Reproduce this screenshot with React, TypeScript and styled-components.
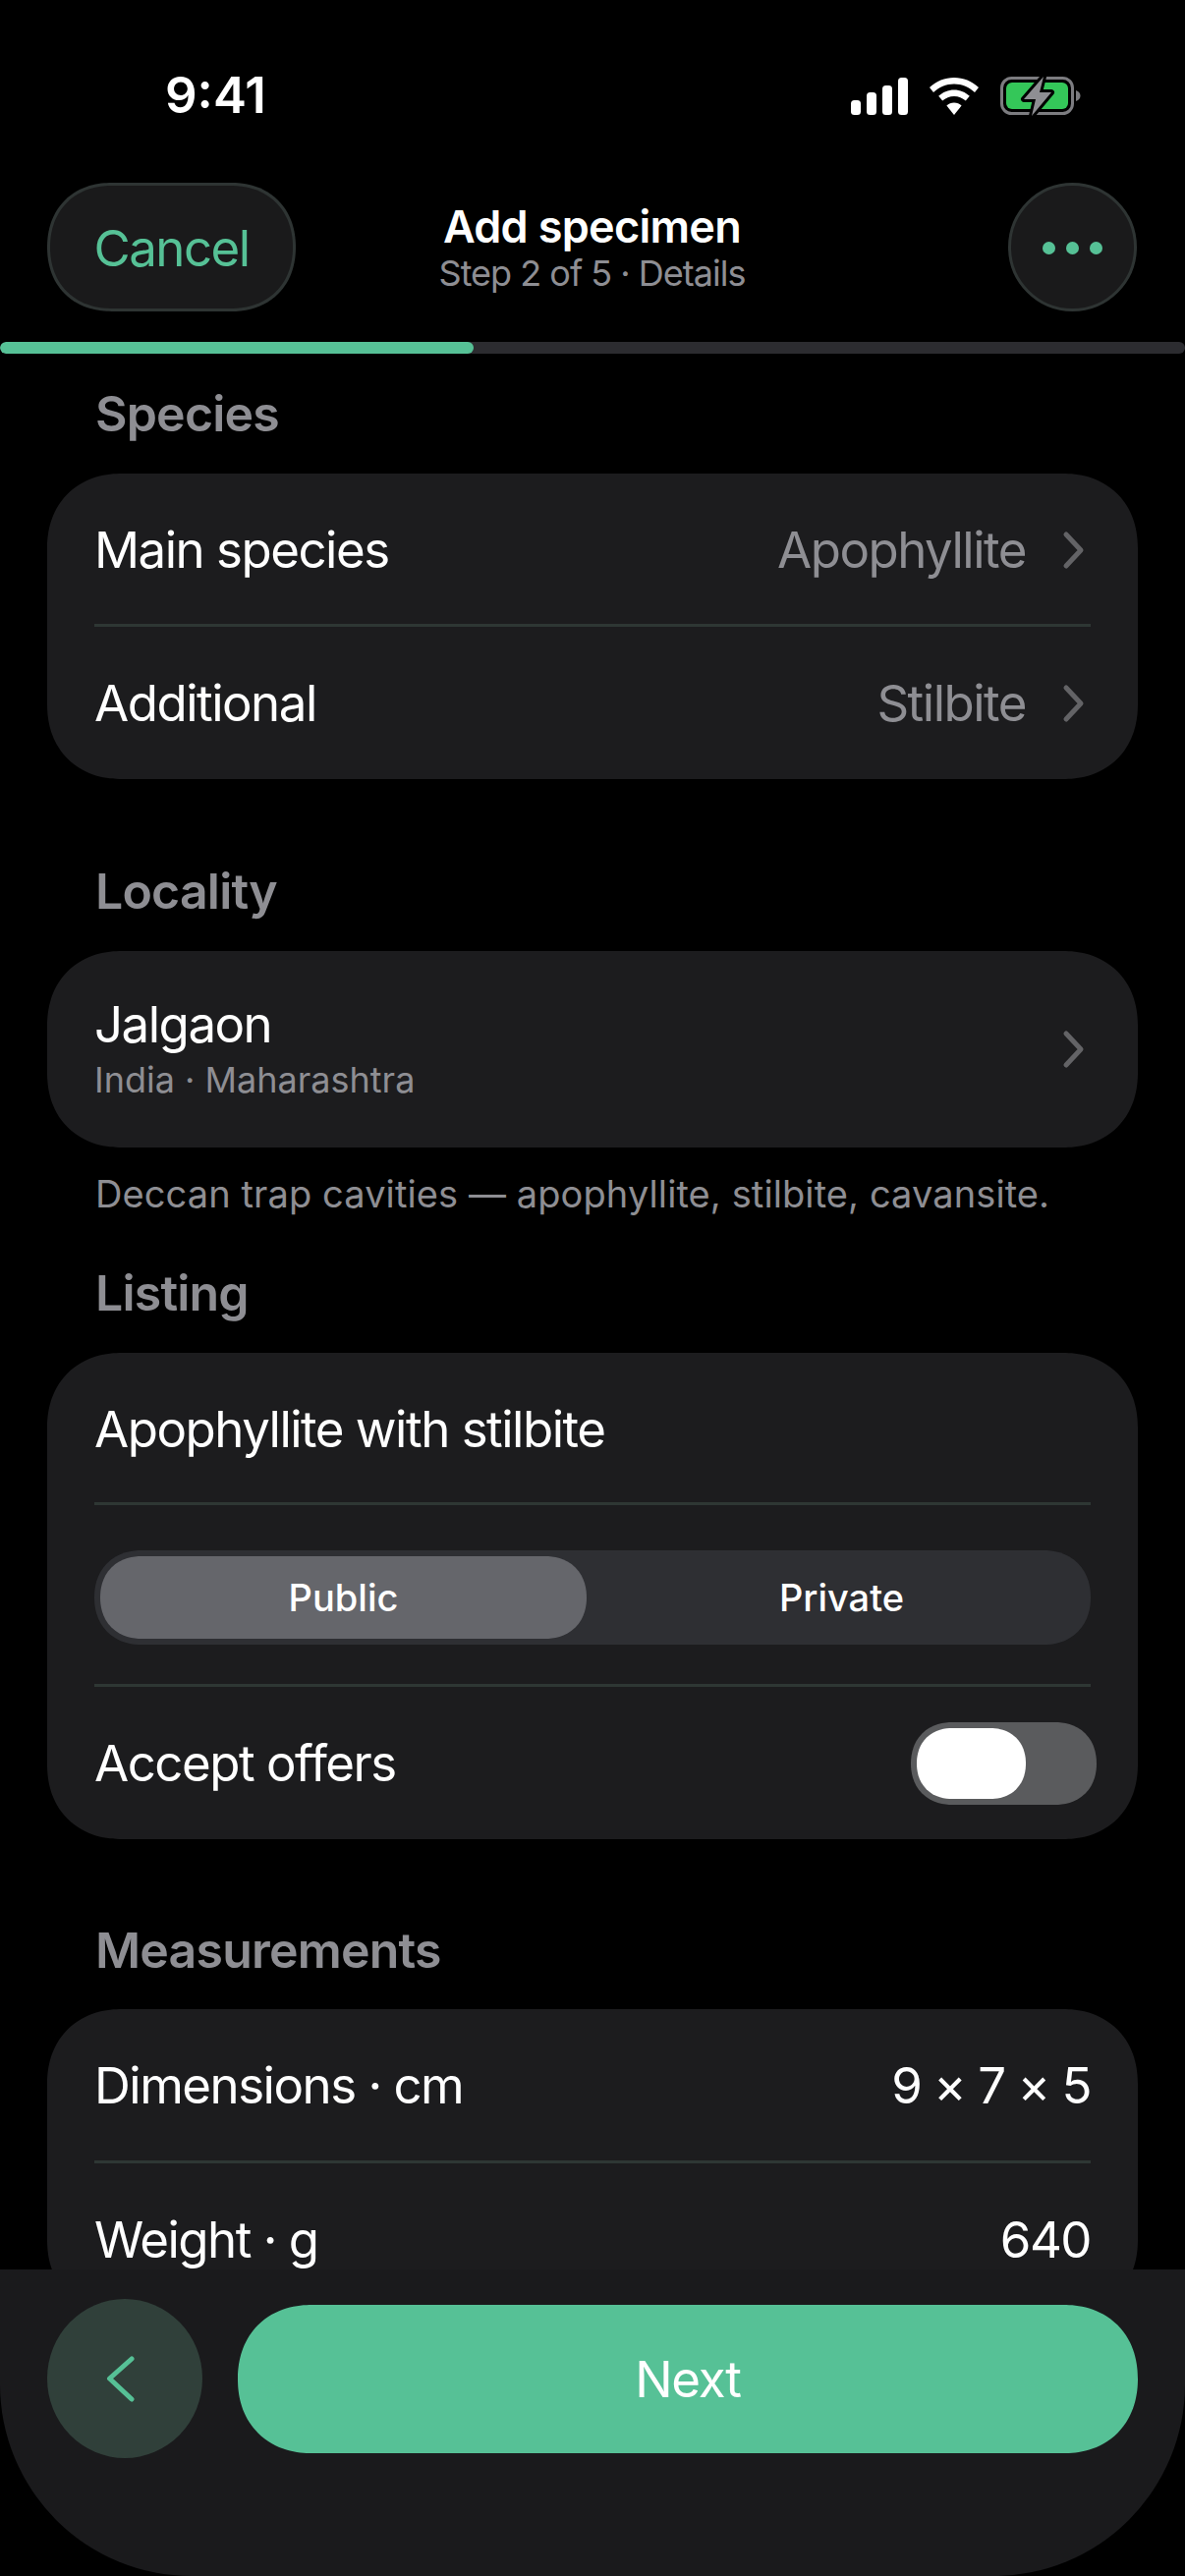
import React from "react";
import styled, { createGlobalStyle, css } from "styled-components";

const Global = createGlobalStyle`
  html, body { margin: 0; padding: 0; background: #000; }
  * { box-sizing: border-box; }
`;

const continuous = css`
  corner-shape: superellipse(1.12);
`;

const Screen = styled.div`
  position: relative;
  width: 1206px;
  height: 2622px;
  overflow: hidden;
  background: #000;
  color: #fff;
  font-family: Inter, "Liberation Sans", sans-serif;
`;

const StatusBar = styled.div`
  height: 186px;
  padding: 0 104px 0 168px;
  display: flex;
  justify-content: space-between;
  align-items: flex-start;
`;

const Clock = styled.div`
  margin-top: 67px;
  font-size: 51px;
  line-height: 60px;
  font-weight: 600;
`;

const StatusIcons = styled.div`
  margin-top: 77px;
  display: flex;
  align-items: center;
  gap: 22px;
`;

const NavBar = styled.div`
  height: 131px;
  padding: 0 49px 0 48px;
  display: grid;
  grid-template-columns: 1fr auto 1fr;
  align-items: center;
`;

const CancelButton = styled.div`
  width: 253px;
  height: 131px;
  padding-top: 2px;
  border-radius: 66px;
  ${continuous}
  background: #1a1a1b;
  border: 3px solid #2e3433;
  color: #56c196;
  font-size: 51px;
  letter-spacing: -1.5px;
  display: flex;
  align-items: center;
  justify-content: center;
`;

const TitleBlock = styled.div`
  padding-top: 2px;
  display: flex;
  flex-direction: column;
  align-items: center;
`;

const Title = styled.div`
  font-size: 45px;
  line-height: 50px;
  font-weight: 600;
  letter-spacing: -0.7px;
`;

const Subtitle = styled.div`
  font-size: 36px;
  line-height: 44px;
  letter-spacing: -1px;
  color: #8e8e93;
`;

const MoreButton = styled.div`
  width: 131px;
  height: 131px;
  padding-top: 2px;
  justify-self: end;
  border-radius: 50%;
  background: #1a1a1b;
  border: 3px solid #2e3433;
  display: flex;
  align-items: center;
  justify-content: center;
  gap: 11px;
`;

const Dot = styled.span`
  width: 13px;
  height: 13px;
  border-radius: 50%;
  background: #56c196;
`;

const ProgressTrack = styled.div`
  margin-top: 31px;
  height: 12px;
  border-radius: 6px;
  background: #2c2c30;
  overflow: hidden;
`;

const ProgressFill = styled.div`
  height: 100%;
  border-radius: 6px;
  background: #56c196;
`;

const Content = styled.div`
  padding: 0 48px;
  display: flex;
  flex-direction: column;
`;

const SectionTitle = styled.div<{ $top: number; $bottom: number }>`
  margin: ${(p) => p.$top}px 0 ${(p) => p.$bottom}px 49px;
  font-size: 50px;
  line-height: 54px;
  font-weight: 600;
  letter-spacing: -0.8px;
  color: #8e8e93;
`;

const Card = styled.div`
  background: #1c1c1e;
  border-radius: 76px;
  ${continuous}
  padding: 0 48px;
`;

const Row = styled.div<{ $height: number; $nudge?: number }>`
  height: ${(p) => p.$height}px;
  padding-top: ${(p) => p.$nudge ?? 0}px;
  display: flex;
  align-items: center;
  justify-content: space-between;
  font-size: 51px;
  letter-spacing: -1.5px;
`;

const Divider = styled.div`
  height: 3px;
  background: #2e3734;
`;

const Value = styled.div`
  display: flex;
  align-items: center;
  gap: 35px;
  color: #8e8e93;
`;

const Chevron = styled.svg`
  width: 28px;
  height: 40px;
  margin-right: 3px;
  fill: none;
  stroke: #636366;
  stroke-width: 5;
  stroke-linecap: round;
  stroke-linejoin: round;
`;

const PlaceText = styled.div`
  display: flex;
  flex-direction: column;
  gap: 5px;
  margin-top: -1px;
`;

const PlaceName = styled.div`
  font-size: 51px;
  line-height: 58px;
`;

const PlaceSub = styled.div`
  font-size: 36px;
  line-height: 44px;
  letter-spacing: 0;
  color: #8e8e93;
`;

const Note = styled.div`
  margin: 24px 0 0 49px;
  font-size: 38px;
  line-height: 46px;
  letter-spacing: 0.1px;
  color: #8e8e93;
`;

const SegmentWrap = styled.div`
  height: 182px;
  padding-top: 5px;
  display: flex;
  align-items: center;
`;

const Segment = styled.div`
  width: 100%;
  height: 96px;
  padding: 6px;
  border-radius: 48px;
  ${continuous}
  background: #2e2f33;
  display: grid;
  grid-template-columns: 495px 1fr;
  gap: 12px;
`;

const SegmentOption = styled.div<{ $active?: boolean }>`
  border-radius: 42px;
  ${continuous}
  background: ${(p) => (p.$active ? "#65666b" : "transparent")};
  display: flex;
  align-items: center;
  justify-content: center;
  font-size: 38px;
  font-weight: 500;
`;

const Toggle = styled.div`
  width: 189px;
  height: 84px;
  margin-right: -6px;
  padding: 6px;
  border-radius: 42px;
  ${continuous}
  background: #5a5b5d;
`;

const ToggleThumb = styled.div`
  width: 111px;
  height: 72px;
  border-radius: 36px;
  ${continuous}
  background: #fff;
`;

const Footer = styled.div`
  position: absolute;
  left: 0;
  right: 0;
  top: 2310px;
  bottom: 0;
  padding: 30px 48px 0;
  background: #1a1a1c;
  border-radius: 0 0 195px 195px;
  display: flex;
  align-items: flex-start;
  gap: 36px;
`;

const BackButton = styled.div`
  flex: none;
  width: 158px;
  height: 162px;
  border-radius: 50%;
  background: #30403a;
  display: flex;
  align-items: center;
  justify-content: center;
`;

const BackChevron = styled.svg`
  width: 30px;
  height: 50px;
  margin-right: 8px;
  fill: none;
  stroke: #56c196;
  stroke-width: 5;
  stroke-linecap: round;
  stroke-linejoin: round;
`;

const NextButton = styled.div`
  flex: 1;
  height: 151px;
  margin-top: 6px;
  border-radius: 76px;
  ${continuous}
  background: #56c196;
  display: flex;
  align-items: center;
  justify-content: center;
  font-size: 51px;
  letter-spacing: -1.2px;
  font-weight: 400;
`;

const RowChevron = () => (
  <Chevron viewBox="0 0 28 40">
    <path d="M6 4 L21 20 L6 36" />
  </Chevron>
);

const Signal = () => (
  <svg width="58" height="38" viewBox="0 0 58 38">
    <rect x="0" y="23" width="10" height="15" rx="3.5" fill="#fff" />
    <rect x="16" y="15" width="10" height="23" rx="3.5" fill="#fff" />
    <rect x="32" y="8" width="10" height="30" rx="3.5" fill="#fff" />
    <rect x="48" y="0" width="10" height="38" rx="3.5" fill="#fff" />
  </svg>
);

const Wifi = () => (
  <svg width="50" height="38" viewBox="0 0 50 38">
    <path d="M25 0 C34.5 0 43 3.6 50 10 L46 15 C40.5 9.6 33 6.4 25 6.4 C17 6.4 9.5 9.6 4 15 L0 10 C7 3.6 15.5 0 25 0 Z" fill="#fff" />
    <path d="M25 12.5 C31 12.5 36.6 14.8 40.8 18.8 L36.8 23.6 C33.6 20.6 29.4 18.9 25 18.9 C20.6 18.9 16.4 20.6 13.2 23.6 L9.2 18.8 C13.4 14.8 19 12.5 25 12.5 Z" fill="#fff" />
    <path d="M25 25.5 C27.9 25.5 30.6 26.6 32.6 28.5 L25 38 L17.4 28.5 C19.4 26.6 22.1 25.5 25 25.5 Z" fill="#fff" />
  </svg>
);

const Battery = () => (
  <svg width="84" height="42" viewBox="0 0 84 42">
    <rect x="1.5" y="2.5" width="72" height="36" rx="10" fill="none" stroke="#7c7c80" strokeWidth="3" />
    <rect x="6" y="7" width="63" height="27" rx="6" fill="#34c759" />
    <path d="M77 15 C80 16 81.5 18 81.5 20.5 C81.5 23 80 25 77 26 Z" fill="#7c7c80" />
    <path d="M44 1 L24 24 L36 24 L32 41 L52 17 L40 17 Z" fill="#8e8e93" stroke="#000" strokeWidth="6" strokeLinejoin="round" paintOrder="stroke" />
  </svg>
);

export default function App() {
  return (
    <Screen>
      <Global />
      <StatusBar>
        <Clock>9:41</Clock>
        <StatusIcons>
          <Signal />
          <Wifi />
          <Battery />
        </StatusIcons>
      </StatusBar>
      <NavBar>
        <CancelButton>Cancel</CancelButton>
        <TitleBlock>
          <Title>Add specimen</Title>
          <Subtitle>Step 2 of 5 · Details</Subtitle>
        </TitleBlock>
        <MoreButton>
          <Dot />
          <Dot />
          <Dot />
        </MoreButton>
      </NavBar>
      <ProgressTrack>
        <ProgressFill style={{ width: `${(2 / 5) * 100}%` }} />
      </ProgressTrack>
      <Content>
        <SectionTitle $top={34} $bottom={34}>Species</SectionTitle>
        <Card>
          <Row $height={153} $nudge={2}>
            Main species
            <Value>Apophyllite<RowChevron /></Value>
          </Row>
          <Divider />
          <Row $height={155}>
            Additional
            <Value>Stilbite<RowChevron /></Value>
          </Row>
        </Card>
        <SectionTitle $top={87} $bottom={34}>Locality</SectionTitle>
        <Card>
          <Row $height={200}>
            <PlaceText>
              <PlaceName>Jalgaon</PlaceName>
              <PlaceSub>India · Maharashtra</PlaceSub>
            </PlaceText>
            <Value><RowChevron /></Value>
          </Row>
        </Card>
        <Note>Deccan trap cavities — apophyllite, stilbite, cavansite.</Note>
        <SectionTitle $top={51} $bottom={34}>Listing</SectionTitle>
        <Card>
          <Row $height={152} $nudge={3}>Apophyllite with stilbite</Row>
          <Divider />
          <SegmentWrap>
            <Segment>
              <SegmentOption $active>Public</SegmentOption>
              <SegmentOption>Private</SegmentOption>
            </Segment>
          </SegmentWrap>
          <Divider />
          <Row $height={155}>
            Accept offers
            <Toggle><ToggleThumb /></Toggle>
          </Row>
        </Card>
        <SectionTitle $top={86} $bottom={33}>Measurements</SectionTitle>
        <Card>
          <Row $height={154} $nudge={1}>
            Dimensions · cm
            <span>9 × 7 × 5</span>
          </Row>
          <Divider />
          <Row $height={154}>
            Weight · g
            <span>640</span>
          </Row>
        </Card>
      </Content>
      <Footer>
        <BackButton>
          <BackChevron viewBox="0 0 30 50">
            <path d="M26 5 L3.5 25 L26 46" />
          </BackChevron>
        </BackButton>
        <NextButton>Next</NextButton>
      </Footer>
    </Screen>
  );
}
